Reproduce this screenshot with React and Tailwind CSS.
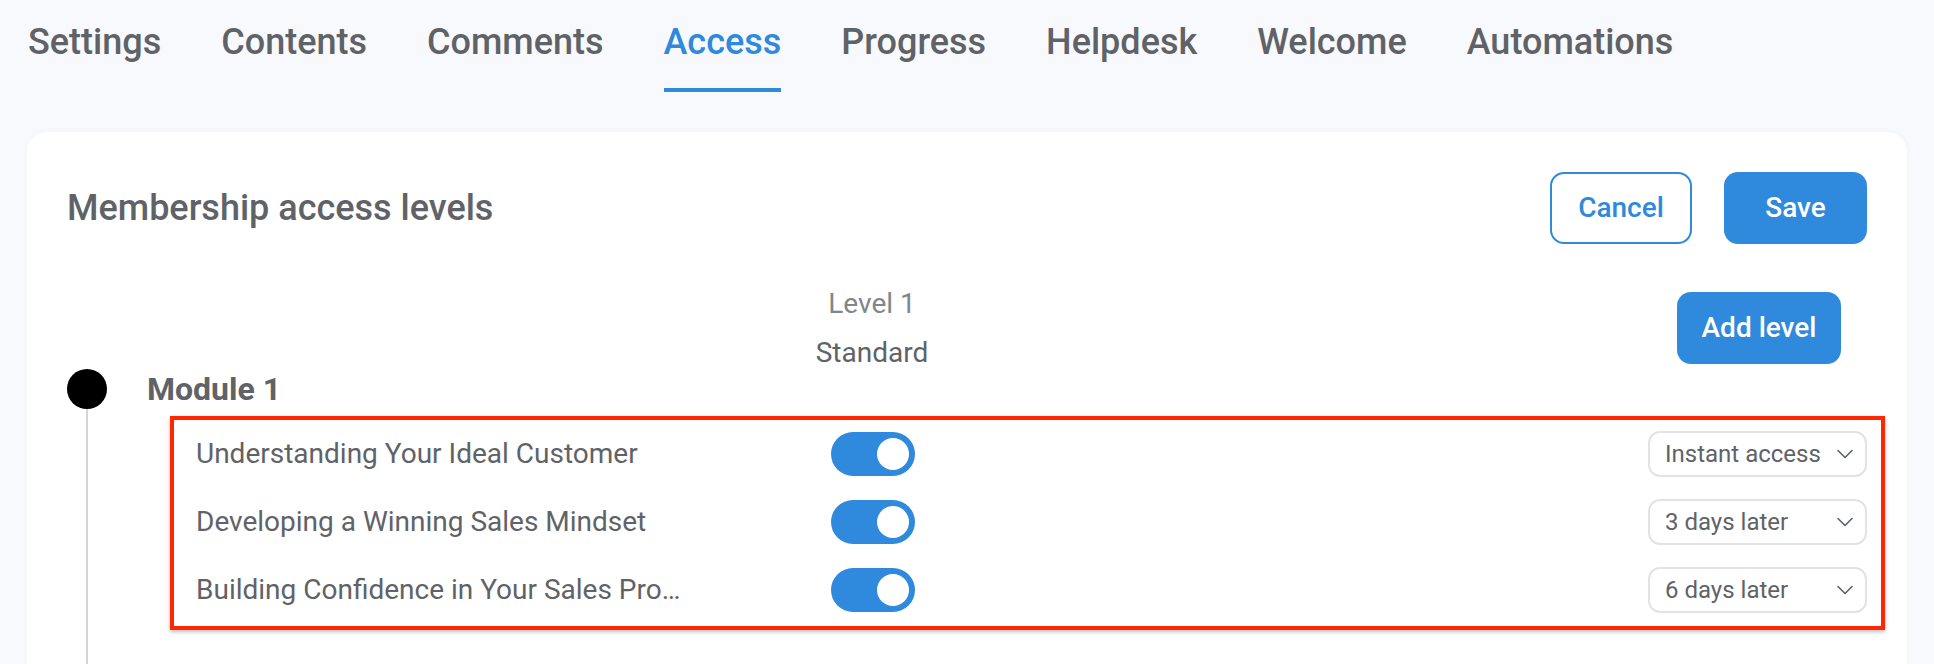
import { ChevronDown } from 'lucide-react';

const tabs = ['Settings', 'Contents', 'Comments', 'Access', 'Progress', 'Helpdesk', 'Welcome', 'Automations'];

const lessons = [
  { title: 'Understanding Your Ideal Customer', delay: 'Instant access' },
  { title: 'Developing a Winning Sales Mindset', delay: '3 days later' },
  { title: 'Building Confidence in Your Sales Pro…', delay: '6 days later' },
];

function Toggle() {
  return (
    <div className="w-[84px] h-[44px] rounded-full bg-[#2f89dc] p-[6px] flex justify-end items-center shrink-0">
      <div className="w-[32px] h-[32px] rounded-full bg-white" />
    </div>
  );
}

export default function App() {
  return (
    <div className="h-[664px] overflow-hidden bg-[#f8f9fc] font-['Roboto',sans-serif] text-[#5f6368]">
      {/* Tabs */}
      <nav className="flex gap-[60px] pl-[28px] pt-[21px]">
        {tabs.map(t => (
          <div key={t} className="flex flex-col">
            <span className={`text-[36px] leading-[42px] font-medium ${t === 'Access' ? 'text-[#2f89dc]' : ''}`}>{t}</span>
            <div className={`mt-[25px] h-1 ${t === 'Access' ? 'bg-[#2f89dc]' : 'bg-transparent'}`} />
          </div>
        ))}
      </nav>

      {/* Card */}
      <div className="mx-[27px] mt-[40px] bg-white rounded-[20px] px-[40px] pt-[40px] shadow-[0_0_6px_rgba(0,0,0,0.03)]">
        <div className="flex items-center justify-between h-[72px]">
          <h1 className="text-[36px] leading-[42px] font-medium">Membership access levels</h1>
          <div className="flex gap-[32px]">
            <button className="w-[142px] h-[72px] rounded-[14px] border-2 border-[#2f89dc] text-[#2f89dc] text-[28px] font-medium">
              Cancel
            </button>
            <button className="w-[143px] h-[72px] rounded-[14px] bg-[#2f89dc] text-white text-[28px] font-medium">
              Save
            </button>
          </div>
        </div>

        {/* Level header */}
        <div className="flex items-start mt-[43px]">
          <div className="ml-[705px] w-[200px] flex flex-col items-center gap-[16px] text-[28px] leading-[33px]">
            <span className="text-[#80868b]">Level 1</span>
            <span>Standard</span>
          </div>
          <button className="ml-auto mr-[26px] mt-[5px] w-[164px] h-[72px] rounded-[14px] bg-[#2f89dc] text-white text-[28px] font-medium">
            Add level
          </button>
        </div>

        {/* Module timeline */}
        <div className="flex">
          <div className="w-[40px] flex flex-col items-center shrink-0">
            <div className="w-[40px] h-[40px] rounded-full bg-black" />
            <div className="w-[2px] flex-1 bg-[#d3d5d8]" />
          </div>
          <div className="flex-1 ml-[40px] pb-[60px]">
            <div className="h-[40px] flex items-center text-[32px] font-bold">Module 1</div>
            <div className="mt-[7px] ml-[23px] -mr-[18px] border-4 border-[#ff2600] pb-[2px] pl-[22px] pr-[14px] shadow-[0_2px_4px_rgba(0,0,0,0.25)]">
              {lessons.map(l => (
                <div key={l.title} className="flex items-center h-[68px]">
                  <span className="w-[635px] text-[28px] truncate pr-4">{l.title}</span>
                  <Toggle />
                  <div className="ml-auto w-[219px] h-[46px] rounded-[12px] border-2 border-[#e2e3e5] flex items-center justify-between pl-[15px] pr-[6px] text-[24px]">
                    <span>{l.delay}</span>
                    <ChevronDown size={28} strokeWidth={1.4} className="text-[#5f6368]" />
                  </div>
                </div>
              ))}
            </div>
          </div>
        </div>
      </div>
    </div>
  );
}
